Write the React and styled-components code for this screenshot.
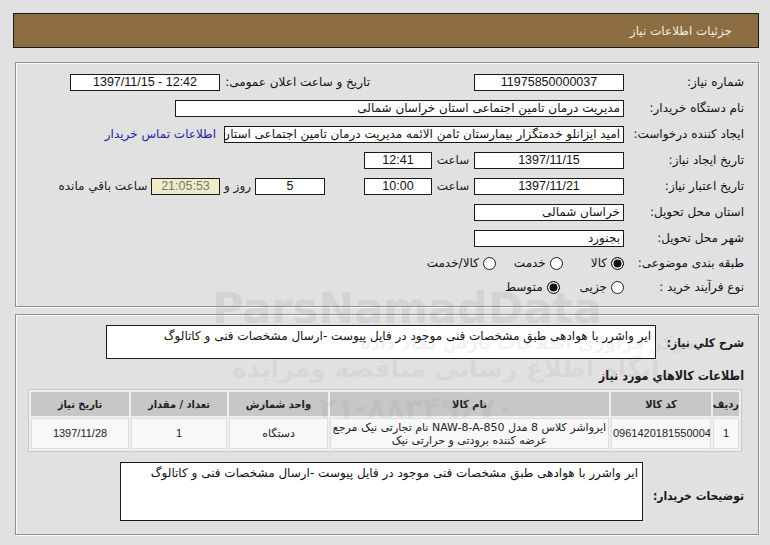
import React from "react";
import styled, { createGlobalStyle } from "styled-components";

const Global = createGlobalStyle`
  html, body { margin: 0; padding: 0; background: #e1e1e1; }
  body { font-family: "DejaVu Sans", sans-serif; font-size: 12px; color: #111; overflow: hidden; }
  * { box-sizing: border-box; }
`;

const NUM = `"Liberation Sans", "DejaVu Sans", sans-serif`;
const COND = `"DejaVu Sans Condensed", "DejaVu Sans", sans-serif`;

const Page = styled.div`
  position: relative;
  direction: rtl;
  width: 770px;
  height: 545px;
  padding: 13px 11px 0 13px;
  overflow: hidden;
`;

const Header = styled.div`
  height: 35px;
  background: #8c6d42;
  border: 1px solid #1e1a14;
  color: #f3ece0;
  font-size: 12px;
  display: flex;
  align-items: center;
  padding-right: 26px;
`;

const Panel = styled.div`
  margin: ${(p) => p.$mt || 0}px 0 0 2px;
  border: 1px solid #8f8f8f;
  box-shadow: inset 1px 1px 0 #fbfbfb, 1px 1px 0 #fbfbfb;
  padding: ${(p) => p.$pad};
  display: flex;
  flex-direction: column;
`;

const Row = styled.div`
  display: flex;
  align-items: center;
  height: ${(p) => p.$h || 26}px;
`;

const Label = styled.div`
  width: ${(p) => p.$w || 120}px;
  margin-right: ${(p) => p.$mr || 0}px;
  flex: none;
  white-space: nowrap;
  text-align: right;
`;

const Box = styled.div`
  flex: none;
  width: ${(p) => p.$w}px;
  height: 17px;
  margin-right: ${(p) => p.$mr || 0}px;
  border: 1px solid #1a1a1a;
  background: ${(p) => p.$bg || "#fff"};
  color: ${(p) => p.$color || "#111"};
  font-family: ${(p) => (p.$num ? NUM : "inherit")};
  font-size: ${(p) => (p.$num ? "12.5px" : "12px")};
  direction: ${(p) => (p.$num ? "ltr" : "rtl")};
  line-height: 15px;
  text-align: ${(p) => p.$align || "center"};
  padding: 0 3px;
  white-space: nowrap;
  overflow: hidden;
`;

const Cell = styled.div`
  flex: none;
  width: ${(p) => p.$w}px;
  margin-right: ${(p) => p.$mr || 0}px;
  text-align: center;
  white-space: nowrap;
  color: ${(p) => p.$color || "#222"};
`;

const Link = styled.a`
  margin-right: 8px;
  color: #2424a8;
  white-space: nowrap;
  text-decoration: none;
`;

const Option = styled.label`
  display: flex;
  align-items: center;
  gap: 4px;
  margin-left: ${(p) => p.$ml || 0}px;
  white-space: nowrap;
`;

const Radio = styled.span`
  width: 13px;
  height: 13px;
  border-radius: 50%;
  border: 1px solid #1c1c1c;
  background: ${(p) => (p.$on ? "#111" : "#fff")};
  box-shadow: ${(p) => (p.$on ? "inset 0 0 0 1.5px #fff" : "none")};
  flex: none;
`;

const BoldLabel = styled.div`
  flex: none;
  width: ${(p) => p.$w}px;
  margin-top: ${(p) => p.$mt || 0}px;
  font-family: ${COND};
  font-weight: bold;
  font-size: 12px;
  white-space: nowrap;
  color: #1a1a1a;
`;

const TextArea = styled.div`
  flex: none;
  width: ${(p) => p.$w}px;
  height: ${(p) => p.$h}px;
  border: 1px solid #1a1a1a;
  background: #fff;
  padding: 3px 4px;
  font-size: 12px;
  line-height: 15px;
  text-align: right;
`;

const Title = styled.div`
  margin-top: 9px;
  height: 16px;
  line-height: 16px;
  font-family: ${COND};
  font-weight: bold;
  font-size: 12.5px;
  color: #1a1a1a;
`;

const Table = styled.table`
  margin: 5px 2px 0 0;
  width: 714px;
  border-collapse: separate;
  border-spacing: 2px;
  border: 1px solid #c9c9c9;
  background: #efefef;
  table-layout: fixed;
`;

const Th = styled.th`
  height: 24px;
  background: #c7c7c7;
  font-family: ${COND};
  font-weight: bold;
  font-size: 11px;
  color: #222;
  text-align: center;
  padding: 0;
  white-space: nowrap;
`;

const Td = styled.td`
  height: 31px;
  background: #f8f8f8;
  border: 1px solid #dedede;
  text-align: center;
  font-family: ${(p) => (p.$num ? NUM : "inherit")};
  font-size: 11px;
  direction: ${(p) => (p.$num ? "ltr" : "rtl")};
  line-height: 13px;
  padding: 0 1px;
  color: #222;
  white-space: nowrap;
  overflow: hidden;
`;

const DescRow = styled.div`
  display: flex;
  align-items: center;
  margin-top: ${(p) => p.$mt || 0}px;
`;

const Buttons = styled.div`
  display: flex;
  justify-content: center;
  gap: 16px;
  margin: 14px 2px 0 0;
`;

const Btn = styled.div`
  width: ${(p) => p.$w}px;
  height: 24px;
  border: 1px solid #111;
  background: ${(p) => p.$bg};
`;

const Watermark = styled.div`
  position: absolute;
  pointer-events: none;
  left: ${(p) => p.$x}px;
  top: ${(p) => p.$y}px;
  font-size: ${(p) => p.$s}px;
  font-weight: bold;
  color: rgba(120, 120, 120, ${(p) => p.$a || 0.18});
  white-space: nowrap;
  direction: ${(p) => p.$dir || "rtl"};
  font-family: "DejaVu Sans", sans-serif;
`;

export default function App() {
  return (
    <>
      <Global />
      <Page>
        <Header>جزئیات اطلاعات نیاز</Header>

        <Panel $mt={14} $pad="6px 14px 7px 10px">
          <Row>
            <Label>شماره نیاز:</Label>
            <Box $w={150} $num>11975850000037</Box>
            <Label $w={141} $mr={104}>تاریخ و ساعت اعلان عمومی:</Label>
            <Box $w={150} $mr={9} $num>1397/11/15 - 12:42</Box>
          </Row>
          <Row>
            <Label>نام دستگاه خریدار:</Label>
            <Box $w={449} $align="right">مدیریت درمان تامین اجتماعی استان خراسان شمالی</Box>
          </Row>
          <Row>
            <Label>ایجاد کننده درخواست:</Label>
            <Box $w={400} $align="right">امید ایزانلو خدمتگزار بیمارستان ثامن الائمه مدیریت درمان تامین اجتماعی استان خراسان شمالی</Box>
            <Link href="#">اطلاعات تماس خریدار</Link>
          </Row>
          <Row>
            <Label>تاریخ ایجاد نیاز:</Label>
            <Box $w={150} $num>1397/11/15</Box>
            <Cell $w={42}>ساعت</Cell>
            <Box $w={68} $num>12:41</Box>
          </Row>
          <Row>
            <Label>تاریخ اعتبار نیاز:</Label>
            <Box $w={150} $num>1397/11/21</Box>
            <Cell $w={42}>ساعت</Cell>
            <Box $w={68} $num>10:00</Box>
            <Box $w={70} $mr={39} $num>5</Box>
            <Cell $w={35}>روز و</Cell>
            <Box $w={69} $bg="#efecc9" $color="#777" $num>21:05:53</Box>
            <Cell $w={96}>ساعت باقي مانده</Cell>
          </Row>
          <Row>
            <Label>استان محل تحویل:</Label>
            <Box $w={150} $align="right">خراسان شمالی</Box>
          </Row>
          <Row>
            <Label>شهر محل تحویل:</Label>
            <Box $w={150} $align="right">بجنورد</Box>
          </Row>
          <Row $h={24}>
            <Label>طبقه بندی موضوعی:</Label>
            <Option $ml={28}><Radio $on />کالا</Option>
            <Option $ml={18}><Radio />خدمت</Option>
            <Option><Radio />کالا/خدمت</Option>
          </Row>
          <Row $h={24}>
            <Label>نوع فرآیند خرید :</Label>
            <Option $ml={20}><Radio />جزیی</Option>
            <Option><Radio $on />متوسط</Option>
          </Row>
        </Panel>

        <Panel $mt={7} $pad="10px 14px 13px 14px">
          <DescRow>
            <BoldLabel $w={88} $mt={2}>شرح کلي نياز:</BoldLabel>
            <TextArea $w={550} $h={34}>ایر واشرر  با هوادهی طبق مشخصات فنی موجود در فایل پیوست -ارسال مشخصات فنی و کاتالوگ</TextArea>
          </DescRow>
          <Title>اطلاعات كالاهاي مورد نياز</Title>
          <Table>
            <colgroup>
              <col style={{ width: 26 }} />
              <col style={{ width: 100 }} />
              <col style={{ width: 279 }} />
              <col style={{ width: 99 }} />
              <col style={{ width: 96 }} />
              <col style={{ width: 98 }} />
            </colgroup>
            <thead>
              <tr>
                <Th>ردیف</Th>
                <Th>کد کالا</Th>
                <Th>نام کالا</Th>
                <Th>واحد شمارش</Th>
                <Th>تعداد / مقدار</Th>
                <Th>تاریخ نیاز</Th>
              </tr>
            </thead>
            <tbody>
              <tr>
                <Td $num>1</Td>
                <Td $num>0961420181550004</Td>
                <Td>
                  ایرواشر کلاس 8 مدل NAW-8-A-850 نام تجارتی نیک مرجع
                  <br />
                  عرضه کننده برودتی و حرارتی نیک
                </Td>
                <Td>دستگاه</Td>
                <Td $num>1</Td>
                <Td $num>1397/11/28</Td>
              </tr>
            </tbody>
          </Table>
          <DescRow $mt={10}>
            <BoldLabel $w={101} $mt={8}>توضیحات خریدار:</BoldLabel>
            <TextArea $w={523} $h={59}>ایر واشرر  با هوادهی طبق مشخصات فنی موجود در فایل پیوست -ارسال مشخصات فنی و کاتالوگ</TextArea>
          </DescRow>
        </Panel>

        <Buttons>
          <Btn $w={99} $bg="#f2fff2" />
          <Btn $w={179} $bg="#ecffec" />
          <Btn $w={50} $bg="#ecffec" />
          <Btn $w={50} $bg="#ffdede" />
          <Btn $w={49} $bg="#ffdede" />
        </Buttons>

        <Watermark $x={212} $y={283} $s={43} $dir="ltr" $a={0.15}>ParsNamadData</Watermark>
        <Watermark $x={360} $y={332} $s={18} $a={0.09}>مرکز فراوری اطلاعات پارس نماد داده</Watermark>
        <Watermark $x={232} $y={354} $s={25} $a={0.11}>پایگاه اطلاع رسانی مناقصه ومزایده</Watermark>
        <Watermark $x={300} $y={390} $s={30} $a={0.09} $dir="ltr">۰۲۱-۸۸۳۴۹۶۷۰</Watermark>
      </Page>
    </>
  );
}
